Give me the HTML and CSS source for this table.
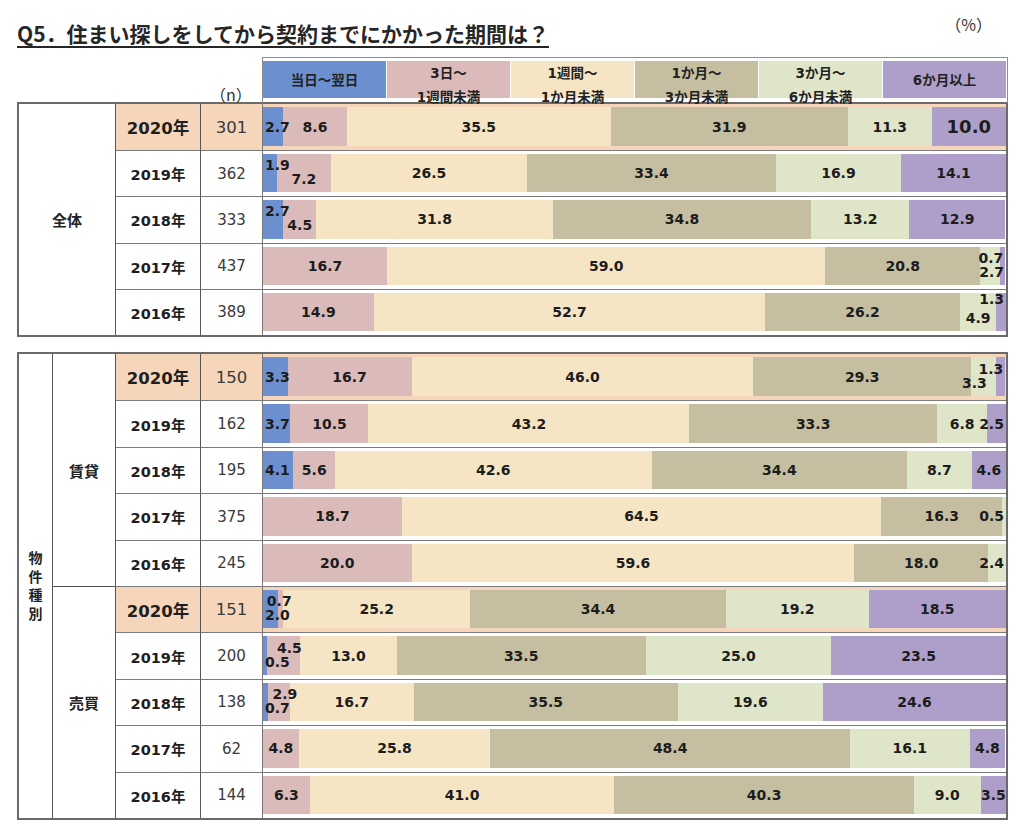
FILE: index.html
```html
<!DOCTYPE html>
<html lang="ja">
<head>
<meta charset="utf-8">
<title>Q5</title>
<link rel="stylesheet" href="styles.css">
</head>
<body>
<div class="page">
  <div class="top">
    <h1 class="title">Q5．住まい探しをしてから契約までにかかった期間は？</h1>
    <span class="pct">（%）</span>
  </div>

  <div class="head">
    <div class="n-head">（n）</div>
    <div class="legend">
      <div class="lg c1 one">当日～翌日</div>
      <div class="lg c2">3日～<br>1週間未満</div>
      <div class="lg c3">1週間～<br>1か月未満</div>
      <div class="lg c4">1か月～<br>3か月未満</div>
      <div class="lg c5">3か月～<br>6か月未満</div>
      <div class="lg c6 one">6か月以上</div>
    </div>
  </div>

  <div class="tbl t1">
    <div class="grp g-all">全体</div>

    <div class="row hl">
      <div class="yr">2020年</div><div class="n">301</div>
      <div class="bar">
        <div class="s c1 al" style="width:2.7%"><span class="v">2.7</span></div>
        <div class="s c2" style="width:8.6%"><span class="v">8.6</span></div>
        <div class="s c3" style="width:35.5%"><span class="v">35.5</span></div>
        <div class="s c4" style="width:31.9%"><span class="v">31.9</span></div>
        <div class="s c5" style="width:11.3%"><span class="v">11.3</span></div>
        <div class="s c6" style="width:10.0%"><span class="v big">10.0</span></div>
      </div>
    </div>
    <div class="row">
      <div class="yr">2019年</div><div class="n">362</div>
      <div class="bar">
        <div class="s c1 al" style="width:1.9%"><span class="v hi">1.9</span></div>
        <div class="s c2" style="width:7.2%"><span class="v lo">7.2</span></div>
        <div class="s c3" style="width:26.5%"><span class="v">26.5</span></div>
        <div class="s c4" style="width:33.4%"><span class="v">33.4</span></div>
        <div class="s c5" style="width:16.9%"><span class="v">16.9</span></div>
        <div class="s c6" style="width:14.1%"><span class="v">14.1</span></div>
      </div>
    </div>
    <div class="row">
      <div class="yr">2018年</div><div class="n">333</div>
      <div class="bar">
        <div class="s c1 al" style="width:2.7%"><span class="v hi">2.7</span></div>
        <div class="s c2" style="width:4.5%"><span class="v lo">4.5</span></div>
        <div class="s c3" style="width:31.8%"><span class="v">31.8</span></div>
        <div class="s c4" style="width:34.8%"><span class="v">34.8</span></div>
        <div class="s c5" style="width:13.2%"><span class="v">13.2</span></div>
        <div class="s c6" style="width:12.9%"><span class="v">12.9</span></div>
      </div>
    </div>
    <div class="row">
      <div class="yr">2017年</div><div class="n">437</div>
      <div class="bar">
        <div class="s c2" style="width:16.7%"><span class="v">16.7</span></div>
        <div class="s c3" style="width:59.0%"><span class="v">59.0</span></div>
        <div class="s c4" style="width:20.8%"><span class="v">20.8</span></div>
        <div class="s c5 ar" style="width:2.7%"><span class="v lo fw">2.7</span></div>
        <div class="s c6 ar" style="width:0.7%"><span class="v hi">0.7</span></div>
      </div>
    </div>
    <div class="row">
      <div class="yr">2016年</div><div class="n">389</div>
      <div class="bar">
        <div class="s c2" style="width:14.9%"><span class="v">14.9</span></div>
        <div class="s c3" style="width:52.7%"><span class="v">52.7</span></div>
        <div class="s c4" style="width:26.2%"><span class="v">26.2</span></div>
        <div class="s c5" style="width:4.9%"><span class="v lo">4.9</span></div>
        <div class="s c6 ar" style="width:1.3%"><span class="v hi2">1.3</span></div>
      </div>
    </div>
  </div>

  <div class="tbl t2">
    <div class="cat"><span class="vert">物件種別</span></div>
    <div class="grp g-rent">賃貸</div>
    <div class="grp g-buy">売買</div>

    <div class="row hl">
      <div class="yr">2020年</div><div class="n">150</div>
      <div class="bar">
        <div class="s c1 al" style="width:3.3%"><span class="v">3.3</span></div>
        <div class="s c2" style="width:16.7%"><span class="v">16.7</span></div>
        <div class="s c3" style="width:46.0%"><span class="v">46.0</span></div>
        <div class="s c4" style="width:29.3%"><span class="v">29.3</span></div>
        <div class="s c5" style="width:3.3%"><span class="v lo lf">3.3</span></div>
        <div class="s c6 ar" style="width:1.3%"><span class="v hi">1.3</span></div>
      </div>
    </div>
    <div class="row">
      <div class="yr">2019年</div><div class="n">162</div>
      <div class="bar">
        <div class="s c1 al" style="width:3.7%"><span class="v">3.7</span></div>
        <div class="s c2" style="width:10.5%"><span class="v">10.5</span></div>
        <div class="s c3" style="width:43.2%"><span class="v">43.2</span></div>
        <div class="s c4" style="width:33.3%"><span class="v">33.3</span></div>
        <div class="s c5" style="width:6.8%"><span class="v">6.8</span></div>
        <div class="s c6 ar" style="width:2.5%"><span class="v">2.5</span></div>
      </div>
    </div>
    <div class="row">
      <div class="yr">2018年</div><div class="n">195</div>
      <div class="bar">
        <div class="s c1 al" style="width:4.1%"><span class="v">4.1</span></div>
        <div class="s c2" style="width:5.6%"><span class="v">5.6</span></div>
        <div class="s c3" style="width:42.6%"><span class="v">42.6</span></div>
        <div class="s c4" style="width:34.4%"><span class="v">34.4</span></div>
        <div class="s c5" style="width:8.7%"><span class="v">8.7</span></div>
        <div class="s c6" style="width:4.6%"><span class="v">4.6</span></div>
      </div>
    </div>
    <div class="row">
      <div class="yr">2017年</div><div class="n">375</div>
      <div class="bar">
        <div class="s c2" style="width:18.7%"><span class="v">18.7</span></div>
        <div class="s c3" style="width:64.5%"><span class="v">64.5</span></div>
        <div class="s c4" style="width:16.3%"><span class="v">16.3</span></div>
        <div class="s c5 ar" style="width:0.5%"><span class="v">0.5</span></div>
      </div>
    </div>
    <div class="row">
      <div class="yr">2016年</div><div class="n">245</div>
      <div class="bar">
        <div class="s c2" style="width:20.0%"><span class="v">20.0</span></div>
        <div class="s c3" style="width:59.6%"><span class="v">59.6</span></div>
        <div class="s c4" style="width:18.0%"><span class="v">18.0</span></div>
        <div class="s c5 ar" style="width:2.4%"><span class="v">2.4</span></div>
      </div>
    </div>

    <div class="row hl">
      <div class="yr">2020年</div><div class="n">151</div>
      <div class="bar">
        <div class="s c1 al" style="width:2.0%"><span class="v lo">2.0</span></div>
        <div class="s c2 al" style="width:0.7%"><span class="v hi bk">0.7</span></div>
        <div class="s c3" style="width:25.2%"><span class="v">25.2</span></div>
        <div class="s c4" style="width:34.4%"><span class="v">34.4</span></div>
        <div class="s c5" style="width:19.2%"><span class="v">19.2</span></div>
        <div class="s c6" style="width:18.5%"><span class="v">18.5</span></div>
      </div>
    </div>
    <div class="row">
      <div class="yr">2019年</div><div class="n">200</div>
      <div class="bar">
        <div class="s c1 al" style="width:0.5%"><span class="v lo">0.5</span></div>
        <div class="s c2" style="width:4.5%"><span class="v hi fw">4.5</span></div>
        <div class="s c3" style="width:13.0%"><span class="v">13.0</span></div>
        <div class="s c4" style="width:33.5%"><span class="v">33.5</span></div>
        <div class="s c5" style="width:25.0%"><span class="v">25.0</span></div>
        <div class="s c6" style="width:23.5%"><span class="v">23.5</span></div>
      </div>
    </div>
    <div class="row">
      <div class="yr">2018年</div><div class="n">138</div>
      <div class="bar">
        <div class="s c1 al" style="width:0.7%"><span class="v lo">0.7</span></div>
        <div class="s c2" style="width:2.9%"><span class="v hi fw">2.9</span></div>
        <div class="s c3" style="width:16.7%"><span class="v">16.7</span></div>
        <div class="s c4" style="width:35.5%"><span class="v">35.5</span></div>
        <div class="s c5" style="width:19.6%"><span class="v">19.6</span></div>
        <div class="s c6" style="width:24.6%"><span class="v">24.6</span></div>
      </div>
    </div>
    <div class="row">
      <div class="yr">2017年</div><div class="n">62</div>
      <div class="bar">
        <div class="s c2" style="width:4.8%"><span class="v">4.8</span></div>
        <div class="s c3" style="width:25.8%"><span class="v">25.8</span></div>
        <div class="s c4" style="width:48.4%"><span class="v">48.4</span></div>
        <div class="s c5" style="width:16.1%"><span class="v">16.1</span></div>
        <div class="s c6" style="width:4.8%"><span class="v">4.8</span></div>
      </div>
    </div>
    <div class="row">
      <div class="yr">2016年</div><div class="n">144</div>
      <div class="bar">
        <div class="s c2" style="width:6.3%"><span class="v">6.3</span></div>
        <div class="s c3" style="width:41.0%"><span class="v">41.0</span></div>
        <div class="s c4" style="width:40.3%"><span class="v">40.3</span></div>
        <div class="s c5" style="width:9.0%"><span class="v">9.0</span></div>
        <div class="s c6" style="width:3.4%"><span class="v">3.5</span></div>
      </div>
    </div>
  </div>
</div>
</body>
</html>
```

FILE: styles.css
```css
* { box-sizing: border-box; }

html, body {
  margin: 0;
  padding: 0;
  background: #ffffff;
}

body {
  font-family: "DejaVu Sans", "Noto Sans CJK JP", sans-serif;
  color: #1e1e1e;
}

.page {
  width: 1008px;
  padding-left: 17px;
}

/* ---------- title ---------- */
.top {
  height: 57px;
  display: flex;
  justify-content: space-between;
  align-items: flex-start;
}

.title {
  margin: 0;
  padding-top: 21px;
  font-family: "Noto Sans CJK JP", sans-serif;
  font-size: 21px;
  line-height: 24px;
  font-weight: 700;
  color: #262626;
  text-decoration: underline;
  text-decoration-thickness: 2px;
  text-underline-offset: 4px;
  letter-spacing: 0;
}

.pct {
  padding-top: 15px;
  margin-right: 16px;
  font-family: "Noto Sans CJK JP", sans-serif;
  font-size: 16px;
  line-height: 18px;
  color: #333;
}

/* ---------- legend ---------- */
.head {
  display: grid;
  grid-template-columns: 183px 62px 746px;
  height: 45px;
}

.n-head {
  grid-column: 2;
  padding-top: 28px;
  text-align: center;
  font-family: "Noto Sans CJK JP", sans-serif;
  font-size: 16px;
  line-height: 18px;
  color: #333;
}

.legend {
  grid-column: 3;
  display: flex;
  border: 1px solid #8c8c8c;
  border-bottom: none;
  padding: 3px 1px 0 0;
  gap: 1px;
}

.lg {
  flex: 1;
  height: 37px;
  text-align: center;
  font-size: 13.5px;
  font-weight: 700;
  line-height: 24px;
  color: #222;
  white-space: nowrap;
}

.lg.one {
  display: flex;
  align-items: center;
  justify-content: center;
}

/* ---------- colours ---------- */
.c1 { background: #6c8fcf; }
.c2 { background: #dbbaba; }
.c3 { background: #f5e5c5; }
.c4 { background: #c5bea1; }
.c5 { background: #dfe5c9; }
.c6 { background: #ad9fc9; }

/* ---------- tables ---------- */
.tbl {
  display: grid;
  border: 2px solid #6a6a6a;
  width: 991px;
}

.t1 {
  height: 235px;
  grid-template-columns: 96px 85px 62px 744px;
  grid-template-rows: repeat(5, 1fr);
}

.t2 {
  margin-top: 15px;
  height: 468px;
  grid-template-columns: 33px 63px 85px 62px 744px;
  grid-template-rows: repeat(10, 1fr);
}

.row { display: contents; }

.row + .row > div {
  border-top: 1px solid #7a7a7a;
}

.grp {
  display: flex;
  align-items: center;
  justify-content: center;
  font-family: "Noto Sans CJK JP", sans-serif;
  font-weight: 700;
  font-size: 15px;
  color: #222;
}

.g-all { grid-column: 1; grid-row: 1 / 6; }

.cat {
  grid-column: 1;
  grid-row: 1 / 11;
  display: flex;
  align-items: center;
  justify-content: center;
}

.vert {
  writing-mode: vertical-rl;
  text-orientation: upright;
  font-family: "Noto Sans CJK JP", sans-serif;
  font-weight: 700;
  font-size: 14px;
  letter-spacing: 4.5px;
  color: #222;
  padding-top: 4px;
}

.g-rent {
  grid-column: 2;
  grid-row: 1 / 6;
  border-left: 1px solid #555;
}

.g-buy {
  grid-column: 2;
  grid-row: 6 / 11;
  border-left: 1px solid #555;
  border-top: 1px solid #555;
}

.yr {
  border-left: 1px solid #555;
  display: flex;
  align-items: center;
  justify-content: center;
  font-weight: 700;
  font-size: 14.5px;
  color: #1e1e1e;
}

.n {
  border-left: 1px solid #555;
  display: flex;
  align-items: center;
  justify-content: center;
  font-size: 15px;
  color: #3a3a3a;
}

.bar {
  border-left: 1px solid #777;
  display: flex;
  padding: 3px 0 4px 0;
}

.row.hl > .yr,
.row.hl > .n,
.row.hl > .bar {
  background: #f6d6ba;
}

.row.hl > .yr { font-size: 16.5px; }
.row.hl > .n { font-size: 16.5px; }

/* ---------- segments ---------- */
.s {
  flex: none;
  display: flex;
  align-items: center;
  justify-content: center;
  white-space: nowrap;
}

.s.al { justify-content: flex-start; padding-left: 2px; }
.s.ar { justify-content: flex-end; padding-right: 2px; }

.v {
  position: relative;
  z-index: 1;
  font-size: 14px;
  font-weight: 700;
  color: #1c1c1c;
  line-height: 12px;
}

.v.big { font-size: 18px; line-height: 16px; }
.v.hi { top: -8px; }
.v.hi2 { top: -13px; }
.v.lo { top: 6px; }
.v.bk { left: -13px; }
.v.fw { left: 6px; }
.v.lf { left: -9px; }
```
